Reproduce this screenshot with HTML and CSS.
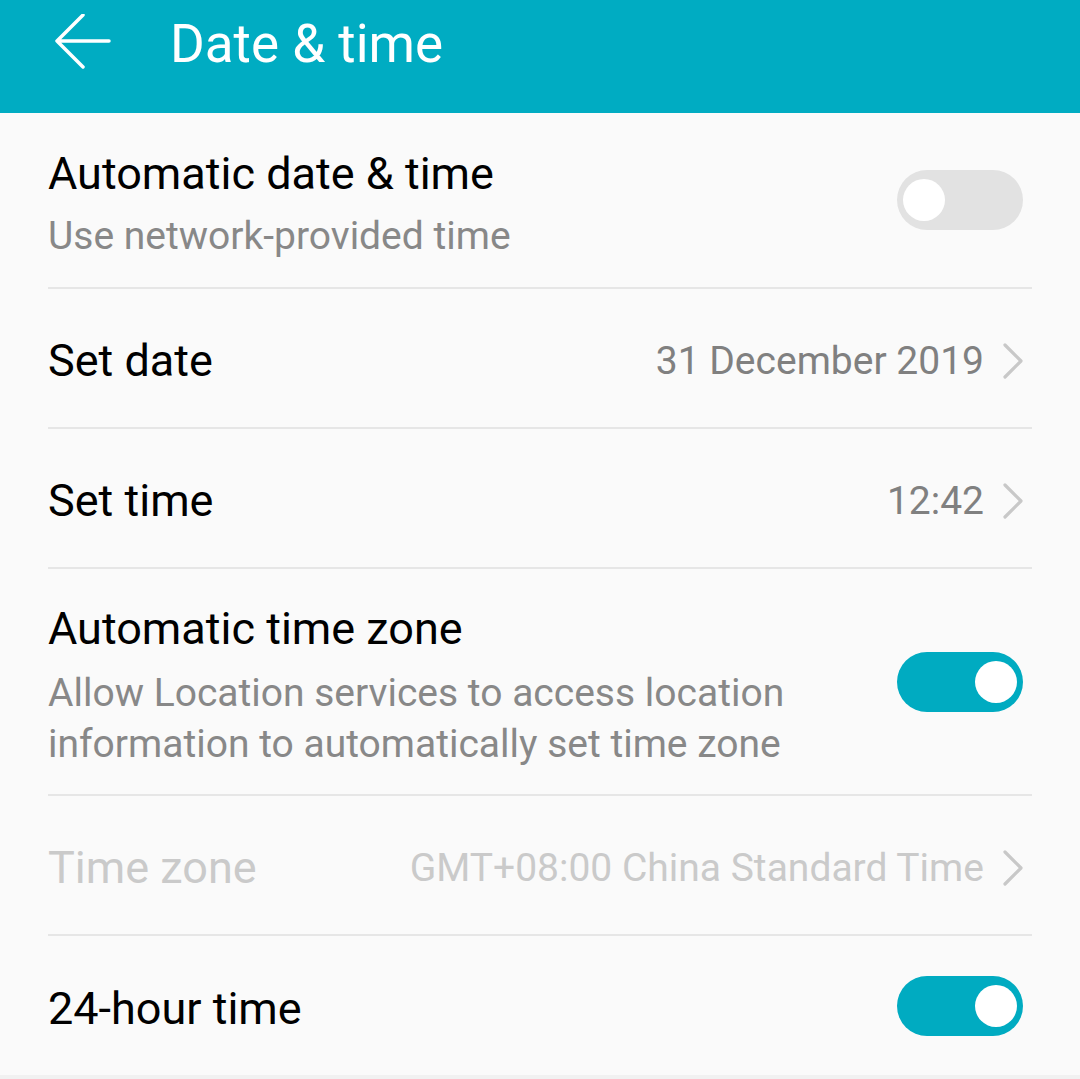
FILE: index.html
```html
<!DOCTYPE html>
<html>
<head>
<meta charset="utf-8">
<link rel="stylesheet" href="styles.css">
</head>
<body>
<header class="appbar">
  <svg class="back" width="56" height="56" viewBox="0 0 56 56" aria-hidden="true">
    <path d="M2 27 H54 M28 1 L2 27 L28 53" fill="none" stroke="#fff" stroke-width="3.5" stroke-linecap="round" stroke-linejoin="round"/>
  </svg>
  <h1 class="title">Date &amp; time</h1>
</header>
<main class="list">
  <div class="row row-auto">
    <div class="text">
      <div class="label">Automatic date &amp; time</div>
      <div class="sub">Use network-provided time</div>
    </div>
    <span class="switch"><span class="knob"></span></span>
  </div>
  <div class="row single">
    <div class="label">Set date</div>
    <div class="value">31 December 2019<svg class="chev" width="22" height="38" viewBox="0 0 22 38"><path d="M3 3 L19 19 L3 35" fill="none" stroke="#c8c8c8" stroke-width="3.2" stroke-linecap="round" stroke-linejoin="round"/></svg></div>
  </div>
  <div class="row single">
    <div class="label">Set time</div>
    <div class="value">12:42<svg class="chev" width="22" height="38" viewBox="0 0 22 38"><path d="M3 3 L19 19 L3 35" fill="none" stroke="#c8c8c8" stroke-width="3.2" stroke-linecap="round" stroke-linejoin="round"/></svg></div>
  </div>
  <div class="row row-zone">
    <div class="text">
      <div class="label">Automatic time zone</div>
      <div class="sub sub-multi">Allow Location services to access location information to automatically set time zone</div>
    </div>
    <span class="switch on"><span class="knob"></span></span>
  </div>
  <div class="row single disabled">
    <div class="label">Time zone</div>
    <div class="value">GMT+08:00 China Standard Time<svg class="chev" width="22" height="38" viewBox="0 0 22 38"><path d="M3 3 L19 19 L3 35" fill="none" stroke="#c8c8c8" stroke-width="3.2" stroke-linecap="round" stroke-linejoin="round"/></svg></div>
  </div>
  <div class="row single last">
    <div class="label">24-hour time</div>
    <span class="switch on"><span class="knob"></span></span>
  </div>
</main>
</body>
</html>
```
FILE: styles.css
```css
* { box-sizing: border-box; }
html, body { margin: 0; padding: 0; }
body {
  width: 1080px;
  height: 1079px;
  overflow: hidden;
  background: #f1f1f1;
  font-family: Roboto, "Noto Sans", sans-serif;
}
.appbar {
  height: 113px;
  background: #00acc2;
  display: flex;
  align-items: flex-start;
  padding: 14px 0 0 55px;
}
.back { flex: none; display: block; }
.title {
  margin: 0 0 0 59px;
  color: #fff;
  font-weight: 400;
  font-size: 53px;
  line-height: 60px;
}
.list {
  background: #fafafa;
  padding: 0 48px;
  height: 962px;
}
.row {
  display: flex;
  align-items: center;
  justify-content: space-between;
  height: 140px;
  border-bottom: 2px solid #e6e6e6;
}
.row.single { padding-top: 6px; }
.row.single .switch { margin-top: -6px; }
.row.last { border-bottom: none; }
.row-auto { height: 176px; }
.row-zone { height: 227px; }
.label {
  font-size: 45px;
  color: #000;
  line-height: 56px;
}
.sub {
  font-size: 39px;
  color: #888;
  line-height: 51px;
  margin-top: 9px;
}
.sub-multi { width: 790px; margin-top: 11px; }
.row-auto .text { margin-top: 8px; }
.row-zone .text { margin-top: 8px; }
.value {
  display: flex;
  align-items: center;
  font-size: 39px;
  color: #808080;
}
.chev { margin-left: 18px; margin-right: 8px; display: block; }
.disabled .label { color: #cacaca; }
.disabled .value { color: #cacaca; }
.switch {
  flex: none;
  width: 126px;
  height: 60px;
  border-radius: 30px;
  background: #e2e2e2;
  position: relative;
  margin-right: 9px;
}
.knob {
  position: absolute;
  top: 9px;
  left: 6px;
  width: 42px;
  height: 42px;
  border-radius: 50%;
  background: #fff;
}
.switch.on { background: #00abc1; }
.switch.on .knob { left: auto; right: 6px; }
```
